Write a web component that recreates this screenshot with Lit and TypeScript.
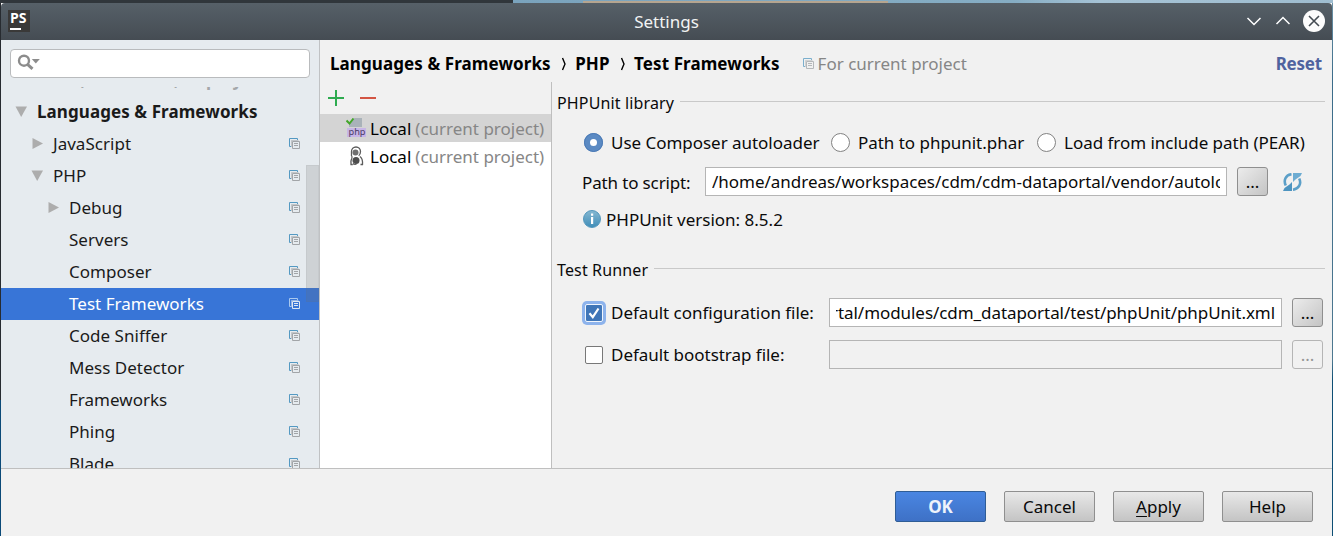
import { LitElement, html, css, svg, nothing } from "lit";
import { customElement, property } from "lit/decorators.js";
import { classMap } from "lit/directives/class-map.js";

@customElement("scope-icon")
class ScopeIcon extends LitElement {
  @property({ type: Boolean, reflect: true }) selected = false;
  static styles = css`
    :host { display: block; width: 11px; height: 11px; }
    :host([faded]) { opacity: 0.75; }
    svg { display: block; }
    .back { stroke: #5499c2; }
    .front { stroke: #a2a5a8; }
    :host([selected]) .back { stroke: #a9c8ee; }
    :host([selected]) .front { stroke: #dde6f3; }
  `;
  render() {
    return html`<svg width="11" height="11" viewBox="0 0 11 11" fill="none">
      <path class="back" d="M2 8.500H.5V.5h8V2" />
      <path class="front" d="M3.500 3.500h7v7h-7zM5 5.500h4M5 7.500h4" />
      <path class="front" d="M2.500 9V2.500h7" opacity=".55" />
    </svg>`;
  }
}

interface TreeItem { label: string; depth: number; open?: boolean; selected?: boolean; bold?: boolean; ghost?: boolean; }

const tree: TreeItem[] = [
  { label: "Build, Execution, Deployment", depth: 0, bold: true, ghost: true },
  { label: "Languages & Frameworks", depth: 0, open: true, bold: true },
  { label: "JavaScript", depth: 1, open: false },
  { label: "PHP", depth: 1, open: true },
  { label: "Debug", depth: 2, open: false },
  { label: "Servers", depth: 2 },
  { label: "Composer", depth: 2 },
  { label: "Test Frameworks", depth: 2, selected: true },
  { label: "Code Sniffer", depth: 2 },
  { label: "Mess Detector", depth: 2 },
  { label: "Frameworks", depth: 2 },
  { label: "Phing", depth: 2 },
  { label: "Blade", depth: 2 },
];

@customElement("settings-sidebar")
class SettingsSidebar extends LitElement {
  static styles = css`
    :host { display: flex; flex-direction: column; width: 318px; background: #e6ebef; border-right: 1px solid #c0c2c4; position: relative; overflow: hidden; }
    .search { box-sizing: border-box; flex: none; height: 29px; width: 300px; margin: 9px 0 0 9px; background: #fff; border: 1px solid #b9bbbd; border-radius: 4px; padding: 4px 0 0 6px; }
    svg { display: block; }
    .viewport { flex: 1; min-height: 0; margin-top: 9px; overflow: hidden; }
    .tree { margin-top: -23px; }
    .row { display: flex; align-items: center; height: 32px; box-sizing: border-box; padding: 0 19px 0 14px; color: #1a1a1a; }
    .row.d1 { padding-left: 30px; }
    .row.d2 { padding-left: 46px; }
    .arrow { width: 22px; flex: none; }
    .label { flex: 1; white-space: nowrap; line-height: 32px; letter-spacing: 0.02px; }
    .bold { font-weight: 700; letter-spacing: 0.08px; }
    .ghost { color: #a4a7aa; line-height: 30px; }
    .selected { background: #3875d7; color: #fff; }
    scope-icon { margin-top: -2px; }
    .thumb { position: absolute; right: 0; top: 125px; width: 13px; height: 137px; box-sizing: border-box; background: rgba(110, 110, 110, 0.2); border: 1px solid rgba(110, 110, 110, 0.08); }
  `;
  arrow(open?: boolean) {
    if (open === undefined) return nothing;
    return html`<svg width="12" height="12" viewBox="0 0 12 12" fill="#adadad">
      ${open ? svg`<path d="M.5.500h11.500L6.200 11z" />` : svg`<path d="M1.500 0v11L12 5.500z" />`}
    </svg>`;
  }
  render() {
    return html`
      <div class="search">
        <svg width="26" height="20" viewBox="0 0 26 20" fill="none">
          <circle cx="7" cy="6.700" r="5" stroke="#8c8c8c" stroke-width="2.400" />
          <path d="M10.500 10.300l5 4.500" stroke="#8c8c8c" stroke-width="3" />
          <path d="M14.800 5h8L18.800 9.500z" fill="#8c8c8c" />
        </svg>
      </div>
      <div class="viewport"><div class="tree">
        ${tree.map((t) => html`
          <div class=${classMap({ row: true, d1: t.depth === 1, d2: t.depth === 2, selected: !!t.selected })}>
            <div class="arrow">${this.arrow(t.open)}</div>
            <div class=${classMap({ label: true, bold: !!t.bold, ghost: !!t.ghost })}>${t.label}</div>
            ${t.depth > 0 ? html`<scope-icon ?selected=${!!t.selected}></scope-icon>` : nothing}
          </div>`)}
      </div></div>
      <div class="thumb"></div>`;
  }
}

@customElement("app-root")
class AppRoot extends LitElement {
  static styles = css`
    :host { display: block; width: 1333px; height: 536px; font: 17px/24px "Noto Sans", sans-serif; color: #0a0a0a; overflow: hidden; }
    svg { display: block; flex: none; }
    .desktop { box-sizing: border-box; height: 536px; padding: 3px 1px 0;
      background:
        linear-gradient(#b5a590, #b5a590) 583px 1px / 305px 2px no-repeat,
        linear-gradient(90deg, #30363b 513px, #7aa3bd 513px, #86adc4 1014px, #a5c2d5 1100px, #9fbdd0) 0 0 / 100% 3px no-repeat,
        linear-gradient(#272b30 400px, #0b4a78 400px) 0 0 / 1px 100% no-repeat,
        linear-gradient(#6d92a6, #3b6c8a 80px, #4d7890 360px, #0e4f75 380px) 100% 0 / 1px 100% no-repeat; }
    .window { height: 533px; display: flex; flex-direction: column; background: #f1f1f1; border-radius: 4px 4px 0 0; overflow: hidden; }
    .titlebar { display: grid; grid-template-columns: 100px 1fr 100px; align-items: center; height: 37px; flex: none; background: linear-gradient(#566068, #454c53); color: #f2f3f3; }
    .logo { width: 22px; height: 22px; margin: -1px 0 0 7px; background: #3a3938; display: flex; flex-direction: column; color: #fff; font: bold 14px/13px "Open Sans", sans-serif; padding-left: 2px; box-sizing: border-box; }
    .logo span { height: 17px; line-height: 16px; }
    .logo i { width: 11px; height: 2px; background: #fff; margin-top: 1px; }
    .title { text-align: center; }
    .controls { display: flex; align-items: center; justify-content: flex-end; padding-right: 7px; gap: 13px; margin-top: -1px; }
    .body { display: flex; flex: none; height: 428px; border-bottom: 1px solid #bfbfbf; }
    .main { flex: 1; min-width: 0; display: flex; flex-direction: column; }
    .crumbs { height: 42px; display: flex; align-items: center; padding: 5px 10px 0 10px; box-sizing: border-box; white-space: nowrap; color: #000; }
    .crumbs b { font-weight: 700; letter-spacing: 0.09px; }
    .sep { width: 24.500px; display: flex; justify-content: center; padding-left: 2px; box-sizing: border-box; }
    .scope { display: flex; align-items: center; gap: 4px; color: #868686; margin-left: 23px; }
    .scope scope-icon { margin-top: -1px; }
    .reset { margin-left: auto; color: #4f639f; font-weight: 700; letter-spacing: -0.2px; }
    .panes { display: flex; flex: 1; }
    .configs { width: 231px; border-right: 1px solid #bfbfbf; background: #fff; }
    .tools { height: 32px; background: #f1f1f1; display: flex; align-items: center; gap: 16px; padding-left: 8px; box-sizing: border-box; }
    .cfg { height: 28px; display: flex; align-items: center; gap: 4px; padding: 2px 0 0 26px; box-sizing: border-box; white-space: nowrap; color: #000; }
    .cfg svg { margin-top: -2px; }
    .cfg.on { background: #d4d4d4; }
    .cfg span { color: #868686; }
    .form { flex: 1; min-width: 0; padding: 9px 7px 0 5px; white-space: nowrap; }
    .group { display: flex; align-items: center; gap: 6px; height: 24px; font-size: 16px; letter-spacing: 0.14px; }
    .group::after { content: ""; flex: 1; height: 1px; background: #c9c9c9; margin-top: -3px; }
    .line { display: flex; align-items: center; }
    .radios { height: 24px; margin-top: 16px; padding-left: 28px; }
    .radio { display: flex; flex: none; align-items: center; gap: 8px; letter-spacing: -0.03px; }
    .dot { width: 19px; height: 19px; margin: -2px 0 0 -1px; box-sizing: border-box; border: 1.500px solid #828282; border-radius: 50%; background: #fff; }
    .dot.on { border: 6px solid #5b8ac3; outline: 1px solid #4b7ab5; outline-offset: -1px; }
    .path { height: 29px; margin-top: 12px; padding-left: 25px; }
    .plabel { width: 123px; padding-top: 2px; letter-spacing: -0.14px; }
    .field { box-sizing: border-box; height: 29px; border: 1px solid #b5b5b5; background: #fff; padding: 0 6px; line-height: 27px; flex: none; }
    .field div { overflow: hidden; height: 27px; display: flex; letter-spacing: -0.02px; }
    .field.end div { justify-content: flex-end; letter-spacing: -0.06px; }
    .field.off { background: #f1f1f1; }
    .more { box-sizing: border-box; flex: none; width: 31px; height: 29px; margin-left: 10px; border: 1px solid #8f8f8f; border-radius: 3px; background: linear-gradient(135deg, #ececec, #c4c4c4); text-align: center; line-height: 28px; }
    .more.off { background: #f1f1f1; border-color: #b5b5b5; color: #969696; }
    .refresh { margin-left: 15px; }
    .info { margin-top: 12px; gap: 5px; padding-left: 26px; }
    .info svg { margin-top: -2px; }
    .runner { margin-top: 26px; }
    .check { height: 29px; margin-top: 16px; padding-left: 28px; }
    .check + .check { margin-top: 13px; }
    .box { width: 18px; height: 18px; box-sizing: border-box; border: 1px solid #787878; border-radius: 2px; background: #fff; flex: none; }
    .box.on { background: #4076b8; border: 1px solid #f1f6fd; box-shadow: 0 0 0 3px #8db3ec; }
    .clabel { width: 226px; flex: none; padding-left: 8px; box-sizing: border-box; letter-spacing: -0.03px; }
    .footer { display: flex; justify-content: flex-end; gap: 18px; padding: 22px 19px 0 0; }
    .btn { box-sizing: border-box; width: 91px; height: 31px; border: 1px solid #8f8f8f; border-radius: 2px; background: linear-gradient(#e8e8e8, #c4c4c4); text-align: center; line-height: 30px; }
    .btn.ok { background: linear-gradient(#4a86e2, #3e71c6); border-color: #2f5d96; color: #eef3fb; font-weight: 700; }
    u { text-decoration-thickness: 1px; text-underline-offset: 3px; }
  `;
  sep() {
    return html`<div class="sep"><svg width="6" height="14" viewBox="0 0 6 14" fill="none"><path d="M1.500 1L4 7 1.500 13" stroke="#000" stroke-width="1.400" /></svg></div>`;
  }
  render() {
    return html`<div class="desktop"><div class="window">
      <div class="titlebar">
        <div class="logo"><span>PS</span><i></i></div>
        <div class="title">Settings</div>
        <div class="controls">
          <svg width="16" height="10" viewBox="0 0 16 10" fill="none"><path d="M2.500 2L9 8.500l6.500-6.500" stroke="#fff" stroke-width="1.500" /></svg>
          <svg width="16" height="10" viewBox="0 0 16 10" fill="none"><path d="M2.500 8L9 1.500 15.500 8" stroke="#fff" stroke-width="1.500" /></svg>
          <svg width="22" height="22" viewBox="0 0 22 22" fill="none"><circle cx="11" cy="11" r="11" fill="#fcfcfc" /><path d="M6 6l10 10M16 6L6 16" stroke="#454c53" stroke-width="1.600" /></svg>
        </div>
      </div>
      <div class="body">
        <settings-sidebar></settings-sidebar>
        <div class="main">
          <div class="crumbs">
            <b>Languages &amp; Frameworks</b>${this.sep()}<b>PHP</b>${this.sep()}<b>Test Frameworks</b>
            <div class="scope"><scope-icon faded></scope-icon>For current project</div>
            <div class="reset">Reset</div>
          </div>
          <div class="panes">
            <div class="configs">
              <div class="tools">
                <svg width="16" height="16" viewBox="0 0 16 16"><path d="M8 0v16M0 8h16" stroke="#2eab4f" stroke-width="2" /></svg>
                <svg width="16" height="16" viewBox="0 0 16 16"><path d="M0 8h16" stroke="#d35543" stroke-width="2" /></svg>
              </div>
              <div class="cfg on">
                <svg width="20" height="20" viewBox="0 0 20 20" fill="none">
                  <path d="M8.500 0H16v9H3V6z" fill="#a9b2b9" />
                  <rect x="1" y="10" width="19" height="9" fill="#c7b5e6" />
                  <text x="2.500" y="17" font-size="9.200" font-family="Noto Sans" fill="#4a3b66">php</text>
                  <path d="M.5 2.500l3 3 4-5" stroke="#43a62b" stroke-width="2" />
                </svg>Local <span>(current project)</span>
              </div>
              <div class="cfg">
                <svg width="20" height="20" viewBox="0 0 20 20" fill="none">
                  <circle cx="9.500" cy="6.500" r="3" fill="#707070" />
                  <path d="M5.500 10V5.500a4.500 4.500 0 0 1 9 0c0 2-.6 3.300-1.800 4.300M5.500 10c1 .8.600 1.600.2 2.600-.8 1.400-1 3.500-.7 5.900h1.800M14 10.500c2 1.500 2.800 4 2.500 8h-2" stroke="#5c5c5c" stroke-width="1.300" />
                  <circle cx="10" cy="14.500" r="3.500" fill="#4d4d4d" />
                  <path d="M7.500 16v2.500h3" stroke="#6b6b6b" />
                </svg>Local <span>(current project)</span>
              </div>
            </div>
            <div class="form">
              <div class="group">PHPUnit library</div>
              <div class="line radios">
                <div class="radio" style="width:247px"><div class="dot on"></div>Use Composer autoloader</div>
                <div class="radio" style="width:206px"><div class="dot"></div>Path to phpunit.phar</div>
                <div class="radio"><div class="dot"></div>Load from include path (PEAR)</div>
              </div>
              <div class="line path">
                <div class="plabel">Path to script:</div>
                <div class="field" style="width:522px"><div>/home/andreas/workspaces/cdm/cdm-dataportal/vendor/autoload.php</div></div>
                <div class="more">...</div>
                <svg class="refresh" width="19" height="18" viewBox="0 0 19 18" fill="none">
                  <path d="M8.500 1.200C2.500 2 .3 7.500 2.800 12.500" stroke="#5b9fc8" stroke-width="2.600" />
                  <path d="M0 18h9V9L6.500 11.500 1.500 15z" fill="#4d94c0" />
                  <path d="M10 16.800c6-.8 8.700-6.300 6.200-11.300" stroke="#5b9fc8" stroke-width="2.600" />
                  <path d="M19 0h-9v9l2.500-2.500 5-3.500z" fill="#6dacd2" />
                </svg>
              </div>
              <div class="line info">
                <svg width="18" height="18" viewBox="0 0 18 18"><defs><linearGradient id="g" x2="0" y2="1"><stop stop-color="#86b8d1" /><stop offset="1" stop-color="#3f8db8" /></linearGradient></defs>
                  <circle cx="9" cy="9" r="8.500" fill="url(#g)" stroke="#5498bd" /><path d="M8 3.500h2.200v2.200H8zM8 7h2.200v7H8z" fill="#fff" /></svg>
                PHPUnit version: 8.5.2
              </div>
              <div class="group runner">Test Runner</div>
              <div class="line check">
                <div class="box on"><svg width="16" height="16" viewBox="0 0 16 16" fill="none"><path d="M3.500 8.200l3.300 4L12.500 3.500" stroke="#fff" stroke-width="2.200" /></svg></div>
                <div class="clabel">Default configuration file:</div>
                <div class="field end" style="width:453px"><div>/cdm-dataportal/modules/cdm_dataportal/test/phpUnit/phpUnit.xml</div></div>
                <div class="more">...</div>
              </div>
              <div class="line check">
                <div class="box"></div>
                <div class="clabel">Default bootstrap file:</div>
                <div class="field off" style="width:453px"></div>
                <div class="more off">...</div>
              </div>
            </div>
          </div>
        </div>
      </div>
      <div class="footer">
        <div class="btn ok">OK</div><div class="btn">Cancel</div><div class="btn"><u>A</u>pply</div><div class="btn">Help</div>
      </div>
    </div></div>`;
  }
}
